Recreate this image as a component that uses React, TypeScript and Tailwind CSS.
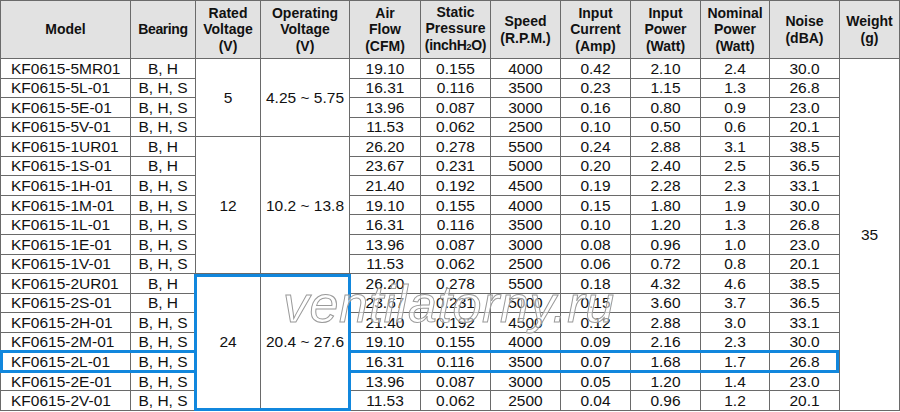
import React from "react";

type Row = [string, string, string, string, string, string, string, string, string];

const rows: Row[] = [
  ["KF0615-5MR01", "B, H", "19.10", "0.155", "4000", "0.42", "2.10", "2.4", "30.0"],
  ["KF0615-5L-01", "B, H, S", "16.31", "0.116", "3500", "0.23", "1.15", "1.3", "26.8"],
  ["KF0615-5E-01", "B, H, S", "13.96", "0.087", "3000", "0.16", "0.80", "0.9", "23.0"],
  ["KF0615-5V-01", "B, H, S", "11.53", "0.062", "2500", "0.10", "0.50", "0.6", "20.1"],
  ["KF0615-1UR01", "B, H", "26.20", "0.278", "5500", "0.24", "2.88", "3.1", "38.5"],
  ["KF0615-1S-01", "B, H", "23.67", "0.231", "5000", "0.20", "2.40", "2.5", "36.5"],
  ["KF0615-1H-01", "B, H, S", "21.40", "0.192", "4500", "0.19", "2.28", "2.3", "33.1"],
  ["KF0615-1M-01", "B, H, S", "19.10", "0.155", "4000", "0.15", "1.80", "1.9", "30.0"],
  ["KF0615-1L-01", "B, H, S", "16.31", "0.116", "3500", "0.10", "1.20", "1.3", "26.8"],
  ["KF0615-1E-01", "B, H, S", "13.96", "0.087", "3000", "0.08", "0.96", "1.0", "23.0"],
  ["KF0615-1V-01", "B, H, S", "11.53", "0.062", "2500", "0.06", "0.72", "0.8", "20.1"],
  ["KF0615-2UR01", "B, H", "26.20", "0.278", "5500", "0.18", "4.32", "4.6", "38.5"],
  ["KF0615-2S-01", "B, H", "23.67", "0.231", "5000", "0.15", "3.60", "3.7", "36.5"],
  ["KF0615-2H-01", "B, H, S", "21.40", "0.192", "4500", "0.12", "2.88", "3.0", "33.1"],
  ["KF0615-2M-01", "B, H, S", "19.10", "0.155", "4000", "0.09", "2.16", "2.3", "30.0"],
  ["KF0615-2L-01", "B, H, S", "16.31", "0.116", "3500", "0.07", "1.68", "1.7", "26.8"],
  ["KF0615-2E-01", "B, H, S", "13.96", "0.087", "3000", "0.05", "1.20", "1.4", "23.0"],
  ["KF0615-2V-01", "B, H, S", "11.53", "0.062", "2500", "0.04", "0.96", "1.2", "20.1"],
];

const groups: Record<number, { span: "row-span-4" | "row-span-7"; rated: string; op: string }> = {
  0: { span: "row-span-4", rated: "5", op: "4.25 ~ 5.75" },
  4: { span: "row-span-7", rated: "12", op: "10.2 ~ 13.8" },
  11: { span: "row-span-7", rated: "24", op: "20.4 ~ 27.6" },
};

const cell = "border-r border-b border-[#6a6a6a] flex items-center justify-center";
const head =
  "border-r border-b border-[#6a6a6a] bg-[#e2e2e2] flex flex-col items-center justify-center text-center font-bold text-[14px] leading-[16.5px]";

export default function App() {
  return (
    <div className="relative w-[900px] h-[412px] bg-white text-[#111] font-['Liberation_Sans',Arial,sans-serif]">
      <div className="grid h-[411px] border-t border-l border-[#6a6a6a] grid-cols-[130px_65px_65px_89px_71px_70px_70px_70px_70px_69px_70px_60px] grid-rows-[58px_repeat(18,minmax(0,1fr))]">
        <div className={head}>Model</div>
        <div className={head}>
          <span className="tracking-[-0.4px]">Bearing</span>
        </div>
        <div className={head}>
          <span>Rated</span>
          <span>Voltage</span>
          <span>(V)</span>
        </div>
        <div className={head}>
          <span>Operating</span>
          <span>Voltage</span>
          <span>(V)</span>
        </div>
        <div className={head}>
          <span>Air</span>
          <span>Flow</span>
          <span>(CFM)</span>
        </div>
        <div className={head}>
          <span>Static</span>
          <span>Pressure</span>
          <span className="tracking-[-0.3px] whitespace-nowrap">
            (inchH<span className="text-[9px]">2</span>O)
          </span>
        </div>
        <div className={head}>
          <span>Speed</span>
          <span>(R.P.M.)</span>
        </div>
        <div className={head}>
          <span>Input</span>
          <span>Current</span>
          <span>(Amp)</span>
        </div>
        <div className={head}>
          <span>Input</span>
          <span>Power</span>
          <span>(Watt)</span>
        </div>
        <div className={head}>
          <span>Nominal</span>
          <span>Power</span>
          <span>(Watt)</span>
        </div>
        <div className={head}>
          <span>Noise</span>
          <span>(dBA)</span>
        </div>
        <div className={head}>
          <span>Weight</span>
          <span>(g)</span>
        </div>

        {rows.map((r, i) => {
          const g = groups[i];
          return (
            <React.Fragment key={r[0]}>
              <div className="border-r border-b border-[#6a6a6a] flex items-center pl-[10px] text-[15.5px]">{r[0]}</div>
              <div className={`${cell} text-[15.5px]`}>{r[1]}</div>
              {g && <div className={`${cell} ${g.span} text-[15.5px]`}>{g.rated}</div>}
              {g && <div className={`${cell} ${g.span} text-[15.5px]`}>{g.op}</div>}
              {r.slice(2).map((v, j) => (
                <div key={j} className={`${cell} text-[15.5px]`}>
                  {v}
                </div>
              ))}
              {i === 0 && <div className={`${cell} row-span-18 text-[15.5px]`}>35</div>}
            </React.Fragment>
          );
        })}
      </div>

      {/* highlight: 24V group rated/operating */}
      <div className="absolute left-[194px] top-[274px] w-[157px] h-[137px] border-[3px] border-[#1187dd] pointer-events-none" />
      {/* highlight: KF0615-2L-01 row */}
      <div className="absolute left-0 top-[350px] w-[195px] h-[23px] border-t-[3px] border-b-[3px] border-l-[3px] border-[#1187dd] pointer-events-none" />
      <div className="absolute left-[350px] top-[350px] w-[489px] h-[23px] border-t-[3px] border-b-[3px] border-r-[3px] border-[#1187dd] pointer-events-none" />

      {/* watermark */}
      <div className="absolute left-[283px] top-[278px] italic text-[52px] tracking-[0.6px] leading-none whitespace-nowrap text-[rgba(255,255,255,0.55)] [-webkit-text-stroke:1px_#9a9a9a] pointer-events-none select-none">
        ventilatorny.ru
      </div>
    </div>
  );
}
